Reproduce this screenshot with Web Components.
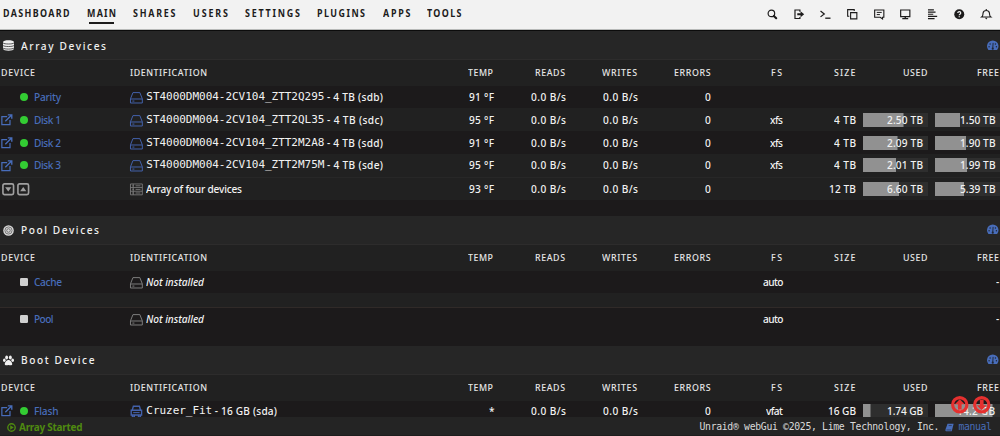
<!DOCTYPE html>
<html lang="en"><head><meta charset="utf-8"><title>Main</title>
<style>html,body{margin:0;height:436px;overflow:hidden;background:#1c1a1b}body{font-family:"Noto Sans","Open Sans",sans-serif;color:#f2f2f2}</style>
</head><body>
<unraid-app></unraid-app>
<script>
const ICONS={
search:'<circle cx="6.7" cy="6.7" r="5" fill="none" stroke="currentColor" stroke-width="1.8"/><path d="M10.500 10.500 14 14" stroke="currentColor" stroke-width="3.200" stroke-linecap="round"/>',
logout:'<path d="M9 4V1.500H1.500v13H9V12" fill="none" stroke="currentColor" stroke-width="1.800"/><path d="M5 6.500h5V3.500L15.500 8 10 12.500v-3H5z" fill="currentColor"/>',
term:'<path d="M.8 3 6.500 7.500.8 12" fill="none" stroke="currentColor" stroke-width="1.900"/><path d="M8 14h8" stroke="currentColor" stroke-width="2"/>',
copy:'<path d="M5.500 5.500h9.500V15H5.500zM3.500 11H1V1h10v2" fill="none" stroke="currentColor" stroke-width="1.700"/>',
comment:'<path d="M1 1.500h14v11h-2v2.700L9.500 12.500H1z" fill="none" stroke="currentColor" stroke-width="1.700"/><path d="M4.200 5.200h7.600M4.200 8.500h4.800" stroke="currentColor" stroke-width="1.500"/>',
monitor:'<path d="M1 1.500h14v10H1z" fill="none" stroke="currentColor" stroke-width="1.800"/><path d="M3.500 14.700h9M8 11.500v3" stroke="currentColor" stroke-width="2"/>',
log:'<path d="M1.500 1.500h9M1.500 4.700h11.500M1.500 8h8M1.500 11.300h14M1.500 14.500h10" stroke="currentColor" stroke-width="1.900"/>',
help:'<circle cx="8" cy="8" r="7.600" fill="currentColor"/><path d="M5.800 6.100C5.800 3.500 10.300 3.500 10.300 6.200 10.300 7.800 8 7.900 8 9.500M8 11v1.700" fill="none" stroke="#f2f2f2" stroke-width="1.900"/>',
bell:'<path d="M1 12.200C3.300 10.500 2.700 8.500 3.200 6 3.700 3.300 5.800 2.300 8 2.300s4.300 1 4.800 3.700C13.300 8.500 12.700 10.500 15 12.200zM8 0v2.500" fill="none" stroke="currentColor" stroke-width="1.700"/><path d="M6 13.500h4L8 16z" fill="currentColor"/>',
db:'<path d="M0 3.200C0-.6 16-.6 16 3.200v9.600c0 3.800-16 3.800-16 0z" fill="currentColor"/><path d="M0 4.300c2 2 14 2 16 0M0 8c2 2 14 2 16 0M0 11.700c2 2 14 2 16 0" fill="none" stroke="#262626" stroke-width="1.100"/>',
target:'<circle cx="8" cy="8" r="7.700" fill="#d8d8d8"/><circle cx="8" cy="8" r="5.200" fill="none" stroke="#4c4c4c"/><circle cx="8" cy="8" r="2.600" fill="none" stroke="#4c4c4c"/>',
paw:'<g fill="currentColor"><ellipse cx="5.300" cy="3.500" rx="2.100" ry="2.900"/><ellipse cx="10.700" cy="3.500" rx="2.100" ry="2.900"/><ellipse cx="1.900" cy="7.600" rx="1.900" ry="2.400"/><ellipse cx="14.100" cy="7.600" rx="1.900" ry="2.400"/><path d="M8 7.300c2.800 0 5.400 3.500 5.400 5.700 0 2.900-3 1.900-5.400 1.700-2.400.2-5.400 1.200-5.400-1.700 0-2.200 2.600-5.700 5.400-5.700z"/></g>',
gauge:'<path d="M2 14.300A8 8 0 1 1 14 14.300z" transform="translate(0 -.3)" fill="currentColor"/><g fill="#1f2533"><circle cx="2.900" cy="9.500" r="1"/><circle cx="4.300" cy="5.600" r="1"/><circle cx="11.700" cy="5.600" r="1"/><circle cx="13.100" cy="9.500" r="1"/><circle cx="8" cy="12" r="1.500"/></g><path d="M8 11.500 8.500 4" stroke="#1f2533" stroke-width="1.300"/>',
ext:'<path d="M8.500 3.500H1.200v11.300h11.300V8.500" fill="none" stroke="currentColor" stroke-width="1.700"/><path d="M6 10 14 2M9.500 1.200h5.500v5.500" fill="none" stroke="currentColor" stroke-width="1.900"/>',
disk:'<path d="M3.700 2h8.600l3.100 7.800V15H.6V9.800zM.6 10h14.800M3 12.600h2.500" fill="none" stroke="currentColor" stroke-width="1.250"/>',
array:'<path d="M.6 1.200h14.800v13.600H.6zM.6 5.700h14.800M.6 10.300h14.800M3 3.500h2M3 8h2M3 12.500h2M4 1v14M7 3.500h6M7 8h6M7 12.500h6" fill="none" stroke="currentColor" stroke-width="1.100"/>',
usb:'<path d="M2.800 6.500 4.200 1.500h7.600l1.400 5M1.500 6.500h13v6h-13zM3 12.500V15h2.400v-2.500M10.600 12.500V15H13v-2.500" fill="none" stroke="currentColor" stroke-width="1.700"/><path d="M4 9.500h8" stroke="currentColor" stroke-width="1.300"/>',
down:'<rect x="1.200" y="1.200" width="13.600" height="13.600" rx="2" fill="none" stroke="currentColor" stroke-width="2.100"/><path d="M4 5.500h8l-4 5.500z" fill="currentColor"/>',
up:'<rect x="1.200" y="1.200" width="13.600" height="13.600" rx="2" fill="none" stroke="currentColor" stroke-width="2.100"/><path d="M4 10.500h8L8 5z" fill="currentColor"/>',
play:'<circle cx="8" cy="8" r="6.600" fill="none" stroke="currentColor" stroke-width="2.400"/><path d="M5.700 4.200 12 8l-6.300 3.800z" fill="currentColor"/>',
book:'<path d="M4.500 1.500h10.800L12 14.500H2C.5 14.500.5 12.500 1 11z" fill="currentColor"/><path d="M6.500 4.500h5.500M2.500 12.400h8.500" stroke="#232323" stroke-width="1"/>',
dot:'<circle cx="8" cy="8" r="8" fill="#33cc33"/>',
square:'<rect width="16" height="16" rx="2.500" fill="#d0d0d0"/>',
goup:'<circle cx="8" cy="8" r="6.500" fill="none" stroke="#e5302f" stroke-width="2.900"/><path d="M8 2.900 12.500 7.600H9.700V12.500H6.300V7.600H3.500z" fill="#e5302f"/>',
godown:'<circle cx="8" cy="8" r="6.500" fill="none" stroke="#e5302f" stroke-width="2.900"/><path d="M8 13.100 12.500 8.400H9.700V3.500H6.300V8.400H3.500z" fill="#e5302f"/>'};
class UiIcon extends HTMLElement{connectedCallback(){const s=this.getAttribute('size')||12;
this.attachShadow({mode:'open'}).innerHTML=`<style>:host{display:block;flex:none;width:${s}px;height:${s}px}svg{display:block;width:100%;height:100%;overflow:visible}</style><svg viewBox="0 0 16 16">${ICONS[this.getAttribute('name')]}</svg>`}}
customElements.define('ui-icon',UiIcon);

/* Slightly condensed text (monospace stays unscaled), tracked to span the width given in "w". */
class UiText extends HTMLElement{connectedCallback(){const k=/\b[mc]\b/.test(this.className)?1:.92;
this.attachShadow({mode:'open'}).innerHTML=`<style>:host{display:block;white-space:pre;flex:none}span{display:inline-block;vertical-align:top;${k<1?`transform-origin:0 50%;transform:scaleX(${k})`:''}}</style><span><slot></slot></span>`;
const sp=this.shadowRoot.querySelector('span'),nat=sp.getBoundingClientRect().width/k,w=+this.getAttribute('w')||nat*k,n=this.textContent.length;
if(n>1)sp.style.letterSpacing=(w/k-nat)/(n-1)+'px';
this.style.width=w+'px';}}
customElements.define('ui-text',UiText);
const t=(s,w,c='')=>`<ui-text w="${w}" class="${c}">${s}</ui-text>`;
const ic=(n,s)=>`<ui-icon name="${n}" size="${s}"></ui-icon>`;
const GRID='display:grid;grid-template-columns:130px 300px 64px 72px 72px 73px 72px 73px 6.500px 65.500px 7px 65px;align-items:center;';

class NavBar extends HTMLElement{connectedCallback(){
const L=[['DASHBOARD',66.5,17.5],['MAIN',29,17],['SHARES',42.5,17.5],['USERS',35,17],['SETTINGS',55,17],['PLUGINS',48,17.5],['APPS',27.5,17],['TOOLS',34.5,0]];
this.attachShadow({mode:'open'}).innerHTML=`<style>:host{display:flex;height:30px;box-sizing:border-box;background:#f2f2f2;color:#1c1b1b;padding:0 9px 0 3px;border-bottom:1px solid #b8bab9;justify-content:space-between;font-weight:700;font-size:9.700px}
nav,div{display:flex;height:28px;align-items:center}a{display:block;line-height:17px;height:19px;padding-bottom:0}a.on{background:linear-gradient(#1c1b1b,#1c1b1b) 2px 100%/25px 2px no-repeat}a{margin-top:1px}div{gap:16.200px}</style>
<nav>${L.map(([s,w,g])=>`<a class="${s=='MAIN'?'on':''}" style="margin-right:${g}px">${t(s,w)}</a>`).join('')}</nav>
<div>${['search','logout','term','copy','comment','monitor','log','help','bell'].map(n=>ic(n,10.5)).join('')}</div>`}}
customElements.define('nav-bar',NavBar);

class SectionTitle extends HTMLElement{connectedCallback(){
this.attachShadow({mode:'open'}).innerHTML=`<style>:host{display:flex;box-sizing:border-box;align-items:center;height:29px;background:#262626;border-bottom:1px solid #2d2c2c;padding:0 2px 0 2.500px;color:#f0f0f0;font-size:11px;line-height:16px;font-weight:500}.g{margin-left:auto;color:#486dba}ui-text{margin-left:7px}</style>
${ic(this.getAttribute('icon'),11)}${t(this.getAttribute('label'),this.getAttribute('w'))}<span class="g">${ic('gauge',11.5)}</span>`}}
customElements.define('section-title',SectionTitle);

class HeadRow extends HTMLElement{connectedCallback(){
this.attachShadow({mode:'open'}).innerHTML=`<style>:host{${GRID}height:26px;background:#212121;color:#e6e6e6;font-size:9.600px;font-weight:500;line-height:14px}ui-text{justify-self:end;margin-right:.7px}.l{justify-self:start}.d{margin-left:1px}.f{margin-right:1.300px}</style>
${t('DEVICE',34,'l d')+t('IDENTIFICATION',77,'l')+t('TEMP',25)+t('READS',30)+t('WRITES',35)+t('ERRORS',36.5)+t('FS',11)+t('SIZE',21.5)}<i></i>${t('USED',24.5)}<i></i>${t('FREE',22,'f')}`}}
customElements.define('head-row',HeadRow);

class UsageBar extends HTMLElement{connectedCallback(){
this.attachShadow({mode:'open'}).innerHTML=`<style>:host{display:flex;box-sizing:border-box;height:14px;align-items:center;justify-content:flex-end;padding-right:5px;background:linear-gradient(#919191,#919191) 0 0/${this.getAttribute('fill')}px 100% no-repeat,#2e2e2e}</style>${t(this.getAttribute('label'),this.getAttribute('w')||36)}`}}
customElements.define('usage-bar',UsageBar);

class DeviceRow extends HTMLElement{connectedCallback(){const a=n=>this.getAttribute(n)||'';
const W={'xfs':13,'auto':20.5,'vfat':17,'4 TB':22,'12 TB':27,'16 GB':28};
const tot=this.hasAttribute('total');
const dev=tot?ic('down',12.5)+'<b></b>'+ic('up',12.5):`<span class="e">${this.hasAttribute('ext')?ic('ext',11.5):''}</span>${ic(a('state'),8)}<ui-text class="n" w="${a('nw')}">${a('name')}</ui-text>`;
const id=a('id');
const txt=tot?t('Array of four devices',96):id?t(id,id.length*6.595,'m')+t(' - '+a('tail'),a('tw')||59):t('Not installed',58,'i');
this.attachShadow({mode:'open'}).innerHTML=`<style>:host{${GRID}box-sizing:border-box;font-size:11px;font-weight:500;line-height:16px;background:${a('bg')}}
.r{justify-self:end}.dev,.id{display:flex;align-items:center}.dev{padding-left:${tot?1.5:1}px;color:${tot?'#a0a0a0':'#486dba'}}.e{width:18.500px}.dev b{width:3px}.n{margin-left:6px}.id ui-icon{margin-right:3.500px;color:${id&&!tot?'#4361ab':'#7c7c7c'};margin-top:1px}.m{font-family:"DejaVu Sans Mono",monospace;font-size:11px;font-weight:400}.i{font-style:italic}.z{margin-right:.5px}</style>
<div class="dev">${dev}</div><div class="id">${ic(a('icon')||'disk',12.8)}${txt}</div>
${a('temp')?t(a('temp'),a('temp')=='*'?5:25,'r'):'<i></i>'}${a('temp')?t('0.0 B/s',35,'r')+t('0.0 B/s',35,'r')+t('0',0,'r'):'<i></i><i></i><i></i>'}
${a('fs')?t(a('fs'),W[a('fs')],'r'):'<i></i>'}${a('size')?t(a('size'),W[a('size')],'r'):'<i></i>'}<i></i>
${a('used')?`<usage-bar label="${a('used')}" fill="${a('uf')}"></usage-bar><i></i><usage-bar label="${a('free')}" fill="${a('ff')}" w="${a('fw')||35.5}"></usage-bar>`:`<i></i><i></i>${a('dash')?t('-',0,'r z'):'<i></i>'}`}`}}
customElements.define('device-row',DeviceRow);

class StatusBar extends HTMLElement{connectedCallback(){
this.attachShadow({mode:'open'}).innerHTML=`<style>:host{display:flex;box-sizing:border-box;height:19px;padding:2px 8px 0 7px;align-items:center;background:#242424;line-height:14px;font-size:10.800px;border-bottom:1px solid #1d1d1d}.s{color:#4f8a10;font-weight:700;margin-left:2.500px}.c{margin-left:auto;font:9.800px/14px "DejaVu Sans Mono",monospace;color:#dadada}.b{color:#486dba;margin:0 4.500px 0 5.500px}.p{color:#4f8a10}.m{font:9.800px/14px "DejaVu Sans Mono",monospace;color:#486dba}</style>
<span class="p">${ic('play',9)}</span>${t('Array Started',63.5,'s')}${t('Unraid® webGui ©2025, Lime Technology, Inc.',240,'c')}<span class="b">${ic('book',9)}</span>${t('manual',33.5,'m')}`}}
customElements.define('status-bar',StatusBar);

class UnraidApp extends HTMLElement{connectedCallback(){
const D='#1c1a1b',G='#212121';
const dr=(n,bg,h,id,tail,temp,rest='')=>`<device-row name="${n}" nw="27" state="dot" style="height:${h}px" bg="${bg}" id="${id}" tail="4 TB (${tail})" temp="${temp}" ${rest}></device-row>`;
this.attachShadow({mode:'open'}).innerHTML=`<style>:host{display:flex;flex-direction:column;width:1000px;height:436px;overflow:hidden;position:relative}main{height:387px;border-top:1px solid #0c0c0c;box-sizing:border-box}.gap{background:#212121;height:15px;box-sizing:border-box;border-bottom:1px solid #302a28}.sp{height:16px}.fab{position:absolute;left:951px;top:396px;display:flex;gap:4.500px}.tot{border-top:1px solid #272727}section-title.first{padding-top:1px}</style>
<nav-bar></nav-bar><main>
<section-title class="first" icon="db" label="Array Devices" w="85"></section-title><head-row></head-row>
${dr('Parity',D,22,'ST4000DM004-2CV104_ZTT2Q295','sdb','91 °F')}
${dr('Disk 1',G,23,'ST4000DM004-2CV104_ZTT2QL35','sdc','95 °F','ext fs="xfs" size="4 TB" used="2.50 TB" uf="40.5" free="1.50 TB" ff="25"')}
${dr('Disk 2',D,23,'ST4000DM004-2CV104_ZTT2M2A8','sdd','91 °F','ext fs="xfs" size="4 TB" used="2.09 TB" uf="34.5" free="1.90 TB" ff="31"')}
${dr('Disk 3',G,22.5,'ST4000DM004-2CV104_ZTT2M75M','sde','95 °F','ext fs="xfs" size="4 TB" used="2.01 TB" uf="33" free="1.99 TB" ff="32"')}
<device-row class="tot" total icon="array" style="height:23.500px" bg="${G}" temp="93 °F" size="12 TB" used="6.60 TB" uf="36" free="5.39 TB" ff="29"></device-row>
<div class="sp"></div>
<section-title icon="target" label="Pool Devices" w="78"></section-title><head-row></head-row>
<device-row name="Cache" nw="28" state="square" style="height:22px" bg="${D}" fs="auto" dash="1"></device-row><div class="gap"></div>
<device-row name="Pool" nw="19.5" state="square" style="height:22px" bg="${D}" fs="auto" dash="1"></device-row>
<div class="sp"></div>
<section-title icon="paw" label="Boot Device" w="73.5"></section-title><head-row></head-row>
<device-row ext name="Flash" nw="24.500" state="dot" icon="usb" style="height:20px" bg="${D}" id="Cruzer_Fit" tail="16 GB (sda)" tw="65" temp="*" fs="vfat" size="16 GB" used="1.74 GB" uf="7.500" free="14.2 GB" ff="57.500" fw="38"></device-row>
</main><status-bar></status-bar><div class="fab">${ic('goup',17.5)}${ic('godown',17.5)}</div>`}}
customElements.define('unraid-app',UnraidApp);
</script></body></html>
